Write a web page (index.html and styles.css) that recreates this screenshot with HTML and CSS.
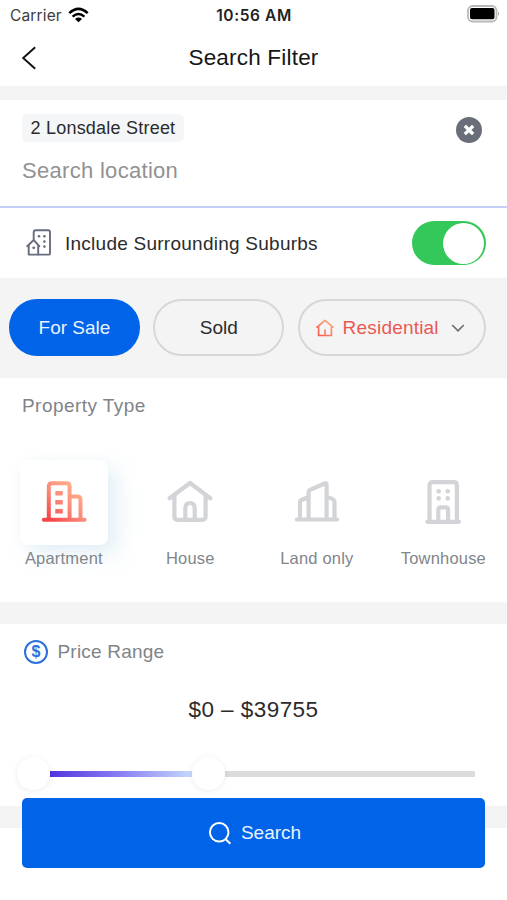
FILE: index.html
```html
<!DOCTYPE html>
<html lang="en">
<head>
<meta charset="utf-8">
<title>Search Filter</title>
<link rel="stylesheet" href="styles.css">
</head>
<body>
<div class="screen">
  <div class="status">
    <div class="carrier"><span>Carrier</span>
      <svg width="21" height="16" viewBox="0 0 21 16"><g fill="none" stroke="#000" stroke-width="2.5"><path d="M1.3 6.1Q10.5-2.4 19.7 6.1"/><path d="M4.6 9.7Q10.5 4.3 16.4 9.7"/></g><path d="M7 11.9Q10.5 9 14 11.9L10.5 15.3z"/></svg>
    </div>
    <div class="time">10:56 AM</div>
    <svg class="battery" width="33" height="18" viewBox="0 0 33 18"><rect x="1" y="1" width="28.5" height="15.5" rx="4.5" fill="#fff" stroke="#b9b9b9" stroke-width="1.8"/><rect x="3" y="3.1" width="24.5" height="11.2" rx="2"/><path d="M31 6.7q2.4 2 0 4z" fill="#aaa"/></svg>
  </div>
  <header class="header">
    <svg width="16" height="24" viewBox="0 0 16 24"><path d="M14.2 1.2L2.2 12L14.2 22.8" fill="none" stroke="#111" stroke-width="1.9"/></svg>
    <h1>Search Filter</h1>
  </header>
  <section class="location">
    <div class="chip-row"><span class="chip">2 Lonsdale Street</span>
      <svg class="clear" width="28" height="28" viewBox="0 0 28 28"><circle cx="14" cy="14" r="13" fill="#6a6e79"/><path d="M11 11l6 6m0-6l-6 6" stroke="#fff" stroke-width="3.3" stroke-linecap="square"/></svg>
    </div>
    <div class="placeholder">Search location</div>
  </section>
  <section class="suburbs">
    <svg width="26" height="28" viewBox="0 0 26 28"><g fill="none" stroke="#676d7e" stroke-width="1.9" stroke-linejoin="round" stroke-linecap="round"><path d="M7.7 10V3.2q0-2 2-2H22q2 0 2 2v21.4q0 1-1 1H2.7V16"/><path d="M1.2 17.2L7.7 11l5.6 6.2M12.2 16v9.4"/></g><g fill="#676d7e"><circle cx="13" cy="7.3" r="1.3"/><circle cx="18.4" cy="7.3" r="1.3"/><circle cx="18.4" cy="12.6" r="1.3"/><circle cx="18.4" cy="17.6" r="1.3"/><circle cx="7.7" cy="18.8" r="1.4"/></g></svg>
    <span>Include Surrounding Suburbs</span>
    <div class="toggle"><i></i></div>
  </section>
  <section class="pills">
    <div class="pill active">For Sale</div>
    <div class="pill">Sold</div>
    <div class="pill wide">
      <svg width="18" height="18" viewBox="0 0 18 18"><defs><linearGradient id="g1" x1="1" y1="0" x2="0" y2="1"><stop offset="0" stop-color="#ffb48a"/><stop offset="1" stop-color="#f7564c"/></linearGradient></defs><path d="M2.6 7.5v9h12.8v-9M1 8.1L9 1.3l8 6.8" fill="none" stroke="url(#g1)" stroke-width="1.7" stroke-linecap="round" stroke-linejoin="round"/><path d="M9 16V10.5" stroke="#f98070" stroke-width="1.7"/></svg>
      <span>Residential</span>
      <svg width="14" height="10" viewBox="0 0 14 10"><path d="M1.2 2L7 7.8L12.8 2" fill="none" stroke="#666d72" stroke-width="1.6"/></svg>
    </div>
  </section>
  <section class="types">
    <h2>Property Type</h2>
    <div class="type-grid">
      <div class="type"><div class="tile selected">
        <svg width="48" height="48" viewBox="0 0 48 48"><defs><linearGradient id="g2" gradientUnits="userSpaceOnUse" x1="36" y1="8" x2="8" y2="40"><stop offset="0" stop-color="#ffb18c"/><stop offset=".5" stop-color="#fb8b79"/><stop offset="1" stop-color="#f7464b"/></linearGradient></defs><g fill="none" stroke="url(#g2)" stroke-width="4" stroke-linejoin="round" stroke-linecap="round"><path d="M3.8 42.7H44.6M8.8 42V9.4q0-3.2 3.2-3.2h14.4q3.2 0 3.2 3.2V42M30 19.5h7.3q3.2 0 3.2 3.2V42"/></g><path d="M15.3 14h7.5v4.6h-7.5zM15.3 23h7.5v4.6h-7.5zM15.3 32h7.5v4.6h-7.5z" fill="url(#g2)"/></svg>
      </div><span>Apartment</span></div>
      <div class="type"><div class="tile">
        <svg width="48" height="48" viewBox="0 0 48 48"><g fill="none" stroke="#d2d4d7" stroke-width="4.2" stroke-linejoin="round" stroke-linecap="round"><path d="M3.7 21.3L24 6l20.3 15.3M8.4 19v20.2q0 3.6 3.6 3.6h24q3.6 0 3.6-3.6V19"/><path d="M19.3 42V31.5q0-5.5 4.7-5.5t4.7 5.5V42"/></g></svg>
      </div><span>House</span></div>
      <div class="type"><div class="tile">
        <svg width="48" height="48" viewBox="0 0 48 48"><g fill="none" stroke="#d2d4d7" stroke-width="4.2" stroke-linejoin="round" stroke-linecap="round"><path d="M3.8 42.5H44.2M15.6 42V15.5q0-2 2-2.9L31.6 6.5q2-.8 2 1V42M15 20.3l-6 2.4q-2 .8-2 2.6V42M34.5 20.2q7 1.6 7 4.2V42"/></g></svg>
      </div><span>Land only</span></div>
      <div class="type"><div class="tile">
        <svg width="48" height="48" viewBox="0 0 48 48"><g fill="none" stroke="#d2d4d7" stroke-width="4.2" stroke-linejoin="round" stroke-linecap="round"><path d="M8.3 44.8H40M10.5 44V8.4q0-3.2 3.2-3.2h21q3.2 0 3.2 3.2V44M19.3 44V32.8q0-2.4 2.4-2.4h5q2.4 0 2.4 2.4V44"/></g><g fill="#d2d4d7"><circle cx="19.7" cy="14.3" r="2.3"/><circle cx="28.7" cy="14.3" r="2.3"/><circle cx="19.7" cy="21.4" r="2.3"/><circle cx="28.7" cy="21.4" r="2.3"/></g></svg>
      </div><span>Townhouse</span></div>
    </div>
  </section>
  <section class="price">
    <div class="price-title"><span class="coin">$</span><h2>Price Range</h2></div>
    <div class="amount">$0 – $39755</div>
    <div class="slider"><i class="knob"></i><i class="fill"></i><i class="knob"></i><i class="rest"></i></div>
  </section>
  <div class="footer">
    <button class="search"><svg width="24" height="24" viewBox="0 0 24 24"><g fill="none" stroke="#fff" stroke-width="2"><circle cx="11.2" cy="11.3" r="9.3"/><path d="M17.4 18l5 4.8"/></g></svg><span>Search</span></button>
  </div>
</div>
</body>
</html>
```
FILE: styles.css
```css
* { box-sizing: border-box; }
body { margin: 0; background: #fff; font-family: "Liberation Sans", Arial, sans-serif; color: #2b2b2d; }
h1, h2 { margin: 0; font-weight: 400; }
svg { display: block; flex: none; }
.screen { width: 507px; height: 900px; overflow: hidden; background: #f4f4f4; }
.status { height: 30px; background: #fff; display: grid; grid-template-columns: 1fr auto 1fr; align-items: center; padding: 0 7px 0 10px; font-family: Inter, sans-serif; font-size: 15.5px; }
.carrier { display: flex; align-items: center; gap: 6px; color: #3c3c3c; letter-spacing: .15px; }
.carrier svg { margin-top: -1px; }
.time { font-weight: 600; color: #222; letter-spacing: .6px; margin-left: -2px; }
.battery { justify-self: end; margin-top: -2px; }
.header { height: 56px; background: #fff; display: grid; grid-template-columns: 60px 1fr 60px; align-items: center; }
.header svg { margin-left: 21px; }
.header h1 { text-align: center; font-size: 22.5px; line-height: 30px; letter-spacing: .2px; color: #161616; }
.location { height: 108px; margin-top: 14px; padding: 14px 23px 0 22px; background: #fff; border-bottom: 2px solid #c5cff6; }
.chip-row { display: flex; justify-content: space-between; }
.chip { height: 28px; width: 162px; padding-left: 8.5px; line-height: 28px; border-radius: 5px; background: #f4f6f7; font-size: 18px; letter-spacing: .22px; white-space: nowrap; }
.clear { margin-top: 1.5px; margin-right: 1px; }
.placeholder { margin-top: 12.5px; line-height: 30px; font-size: 22px; letter-spacing: .3px; color: #929292; }
.suburbs { height: 70px; background: #fff; display: flex; align-items: center; padding: 0 21.5px 0 25.5px; font-size: 19px; letter-spacing: .25px; }
.suburbs span { margin-left: 13.5px; margin-top: 1px; white-space: nowrap; }
.toggle { width: 73.5px; height: 44px; margin-left: auto; border-radius: 22px; background: #34c759; display: flex; justify-content: flex-end; align-items: center; padding-right: 1.5px; }
.toggle i { width: 41px; height: 41px; border-radius: 50%; background: #fff; }
.pills { height: 100px; padding: 21px 21px 0 9px; display: flex; gap: 13.3px; font-size: 19px; line-height: 22px; }
.pill { width: 131px; height: 57px; padding-top: 1px; border: 2px solid #d7d7d7; border-radius: 29px; display: flex; align-items: center; justify-content: center; }
.pill.active { background: #0063e8; border-color: #0063e8; color: #e9f3ff; }
.pill.wide { width: 188px; color: #e95953; letter-spacing: .2px; justify-content: flex-start; padding-left: 16px; }
.pill.wide span { margin: 0 12px 0 9px; }
.types { height: 224px; background: #fff; padding-top: 16px; }
h2 { font-size: 19px; line-height: 22px; letter-spacing: .3px; color: #808489; }
.types h2 { padding-left: 22px; padding-top: 1px; letter-spacing: .45px; }
.type-grid { margin-top: 43px; padding-left: .6px; display: grid; grid-template-columns: repeat(4, 126.5px); }
.type { display: flex; flex-direction: column; align-items: center; }
.type span { font-size: 16.5px; line-height: 22px; margin-top: 2px; letter-spacing: .2px; color: #80868a; }
.tile { width: 88px; height: 85px; border-radius: 8px; display: flex; align-items: center; justify-content: center; padding-bottom: 4px; }
.tile.selected { background: #fff; box-shadow: 10px 10px 22px rgba(160, 200, 220, .27), 0 0 9px rgba(160, 200, 220, .08); }
.price { height: 182px; margin-top: 22px; padding-top: 16px; background: #fff; }
.price-title { display: flex; align-items: center; gap: 9.5px; padding-left: 24px; }
.price-title h2 { letter-spacing: .2px; }
.coin { width: 24px; height: 24px; border: 2px solid #2b70dc; border-radius: 50%; color: #2b70dc; font-size: 16px; line-height: 20px; text-align: center; font-weight: 700; }
.amount { margin-top: 33px; line-height: 26px; text-align: center; font-size: 22.5px; letter-spacing: .45px; }
.slider { display: flex; align-items: center; margin: 34px 0 0 17px; }
.knob { width: 33px; height: 33px; border-radius: 50%; background: #fff; box-shadow: 0 1px 6px rgba(0, 0, 0, .08); z-index: 1; }
.fill { width: 142px; height: 6px; background: linear-gradient(90deg, #5135df, #8b80f2 50%, #c4d8fc); }
.rest { width: 250px; height: 6px; background: #dcdcdc; }
.footer { height: 94px; margin-top: 22px; background: #fff; padding: 0 22px; }
.search { position: relative; top: -30.5px; width: 463px; height: 70px; border: 0; border-radius: 5px; background: #0063e8; display: flex; align-items: center; justify-content: center; gap: 9px; padding: 1px 5px 0 7px; color: #e9f3ff; font: 19px "Liberation Sans", Arial, sans-serif; z-index: 2; }
```
